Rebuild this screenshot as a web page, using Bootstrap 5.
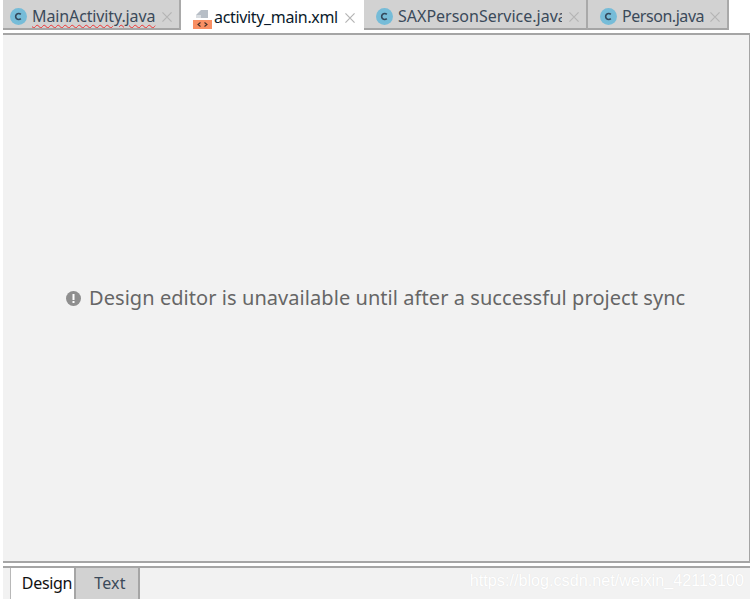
<!DOCTYPE html>
<html lang="en"><head><meta charset="utf-8"><title>Editor</title>
<link rel="stylesheet" href="https://cdn.jsdelivr.net/npm/bootstrap@5.3.0/dist/css/bootstrap.min.css">
<style>
html,body{height:599px;overflow:hidden;background:#fff}
body{font-family:"Noto Sans","Open Sans",sans-serif;}
.shell{width:752px;height:599px;padding-left:3px;padding-right:2px}
.tabbar{height:35px;border-bottom:2px solid #a5a5a5}
.etab{height:30px;background:#d2d2d2;border-right:2px solid #a9a9a9;border-bottom:2px solid #a5a5a5;font-size:16px;color:#3b4a5a;white-space:nowrap;overflow:hidden;padding-left:7px;padding-top:5px}
.etab.on{background:#fff;color:#0b1a2b;border-bottom:0;border-right:0;padding-left:12px;padding-top:5px}
.w1{width:178px}.w2{width:183px}.w3{width:224px}.w4{width:141px}
.etab-c{padding-left:12px}
.gapx{gap:5px}
.fname{line-height:1.2}
.tight0{letter-spacing:-.12px}
.tight1{letter-spacing:-.34px}
.tight2{letter-spacing:-.45px}
.clip{width:164px;overflow:hidden}
.squig{text-decoration:underline wavy #e33 1px;text-underline-offset:2px}
.canvas{height:526px;background:#f2f2f2;border-right:1px solid #a5a5a5}
.msg{font-size:20px;color:#666;white-space:nowrap;padding-left:63px;letter-spacing:.06px}
.msg-t{width:598px;overflow:hidden}
.sep{height:7px;border-top:2px solid #a5a5a5;border-bottom:2px solid #a5a5a5;background:#fff}
.foot{height:31px;background:#f2f2f2;font-size:16px;position:relative}
.btab{height:31px;width:66px;border-right:2px solid #a5a5a5;border-left:1px solid #b8b8b8;background:#fff;color:#111;margin-left:7px;padding-left:9px;padding-bottom:2px;letter-spacing:-.3px}
.btab.off{background:#d2d2d2;color:#3b4a5a;margin-left:0;width:64px;border-left:0;padding-left:6px;letter-spacing:.2px}
.wmark{position:absolute;right:6px;top:0;font-family:"Liberation Sans",sans-serif;font-size:16.2px;color:#fff;text-shadow:0 0 1px #dedede;line-height:24px}
.xml-ico{margin-right:2px;margin-top:3px}
.x-on{margin-left:7px}
.x-a{margin-left:2px}
.x-b{margin-left:1px}
</style></head><body>
<div class="shell d-flex flex-column">
 <div class="tabbar d-flex align-items-start">
  <div class="etab w1 d-flex align-items-center gapx">
   <svg width="17" height="17" viewBox="0 0 17 17" class="flex-shrink-0"><circle cx="8.5" cy="8.5" r="8.5" fill="#76bcd8"/><path d="M10.8 6.4A3 3 0 1 0 10.8 10.6" fill="none" stroke="#33485c" stroke-width="1.6"/></svg>
   <span class="fname squig tight0">MainActivity.java</span>
   <svg width="10" height="10" viewBox="0 0 11 11" class="x-a flex-shrink-0"><path d="M.5.5l10 10M10.5.5l-10 10" stroke="#b4b4b4" stroke-width="1.3"/></svg>
  </div>
  <div class="etab on w2 d-flex align-items-center">
   <svg width="19" height="19" viewBox="0 0 19 19" class="flex-shrink-0 xml-ico"><path d="M8 0h7v8H3V5z" fill="#b7bec6"/><path d="M3 8V5h5V8z" fill="#d9dde1"/><rect x="0" y="10" width="19" height="9" fill="#f98f63"/><path d="M7.5 12.5l-2.5 2 2.5 2M11.5 12.5l2.5 2-2.5 2" fill="none" stroke="#40302a" stroke-width="1.1"/></svg>
   <span class="fname tight1">activity_main.xml</span>
   <svg width="10" height="10" viewBox="0 0 11 11" class="x-on flex-shrink-0"><path d="M.5.5l10 10M10.5.5l-10 10" stroke="#b4b4b4" stroke-width="1.3"/></svg>
  </div>
  <div class="etab w3 etab-c d-flex align-items-center gapx">
   <svg width="17" height="17" viewBox="0 0 17 17" class="flex-shrink-0"><circle cx="8.5" cy="8.5" r="8.5" fill="#76bcd8"/><path d="M10.8 6.4A3 3 0 1 0 10.8 10.6" fill="none" stroke="#33485c" stroke-width="1.6"/></svg>
   <span class="fname clip">SAXPersonService.java</span>
   <svg width="10" height="10" viewBox="0 0 11 11" class="x-a flex-shrink-0"><path d="M.5.5l10 10M10.5.5l-10 10" stroke="#b4b4b4" stroke-width="1.3"/></svg>
  </div>
  <div class="etab w4 etab-c d-flex align-items-center gapx">
   <svg width="17" height="17" viewBox="0 0 17 17" class="flex-shrink-0"><circle cx="8.5" cy="8.5" r="8.5" fill="#76bcd8"/><path d="M10.8 6.4A3 3 0 1 0 10.8 10.6" fill="none" stroke="#33485c" stroke-width="1.6"/></svg>
   <span class="fname tight2">Person.java</span>
   <svg width="10" height="10" viewBox="0 0 11 11" class="x-b flex-shrink-0"><path d="M.5.5l10 10M10.5.5l-10 10" stroke="#b4b4b4" stroke-width="1.3"/></svg>
  </div>
 </div>
 <div class="canvas d-flex align-items-center">
  <div class="msg d-flex align-items-center gap-2">
   <svg width="15" height="15" viewBox="0 0 15 15" class="flex-shrink-0"><circle cx="7.5" cy="7.5" r="7.5" fill="#8f8f8f"/><rect x="6.5" y="3" width="2" height="6" fill="#fff"/><rect x="6.5" y="10" width="2" height="2" fill="#fff"/></svg>
   <span class="msg-t">Design editor is unavailable until after a successful project sync</span>
  </div>
 </div>
 <div class="sep"></div>
 <div class="foot d-flex">
  <div class="btab d-flex align-items-center justify-content-center">Design</div>
  <div class="btab off d-flex align-items-center justify-content-center">Text</div>
  <div class="wmark">https://blog.csdn.net/weixin_42113100</div>
 </div>
</div>
</body></html>
